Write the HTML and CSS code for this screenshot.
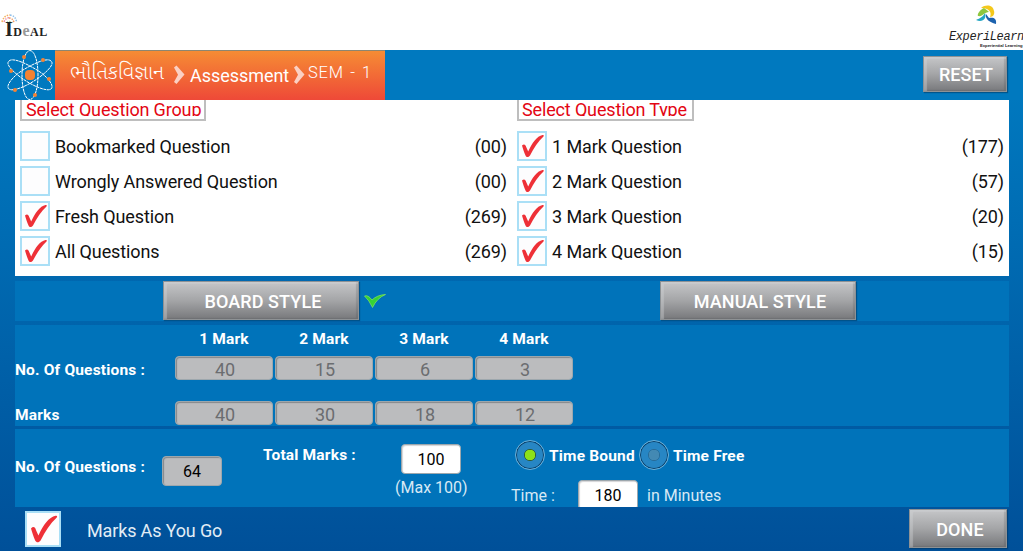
FILE: index.html
```html
<!DOCTYPE html>
<html lang="gu">
<head>
    <meta charset="UTF-8">
    <meta name="viewport" content="width=device-width, initial-scale=1.0">
    <title>Assessment</title>
    <link rel="stylesheet" href="styles.css">
</head>
<body>
    <!-- Shared shapes -->
    <svg width="0" height="0" class="defs">
        <symbol id="tick" viewBox="0 0 30 30">
            <path d="M5 14.500 C7 12.500 8.500 13.500 9.200 16 L11.200 20.500 C15 12 20 5 25.500 4 Q27.500 3.500 26.500 5.500 C21 10.500 17 17 13 24.500 C11.500 26.500 9.500 26.500 8.500 24.500 C7 21 6 18 5 14.500Z" fill="#ee3037"/>
        </symbol>
        <symbol id="chevron" viewBox="0 0 12 20">
            <path d="M1 2.500 L3.500 0.500 L11.500 9.500 L3.500 19 L1 17 L5 9.800Z" fill="#fbd0c3"/>
        </symbol>
    </svg>

    <header class="brand">
        <div class="ideal">
            <svg class="ideal-dots" width="18" height="12" viewBox="0 0 18 12">
                <g fill="none" stroke-width="1.500" stroke-dasharray="1.500 1.200">
                    <path d="M1 8 Q3 1 9 1" stroke="#f4b05c"/>
                    <path d="M9 1 Q15 2 15.500 8" stroke="#8cbde8"/>
                    <path d="M3 8 Q5 3 9 4" stroke="#ee8fa5"/>
                    <path d="M8 4 Q12 4 13 9" stroke="#f09a62"/>
                    <path d="M6 9 Q8 6 11 9" stroke="#a2d388"/>
                </g>
            </svg>
            <span class="ideal-text"><b>I</b>D<i>e</i>AL</span>
        </div>
        <div class="experi">
            <svg class="experi-mark" width="24" height="22" viewBox="0 0 24 22">
                <path d="M6 4 C11 0 18 1 19 7 C20 10 18 13 15 13 C17 8 14 4 6 4Z" fill="#f4c81b"/>
                <path d="M9 4 C4 6 2 11 3 12 C8 13 9 8 14 8 C11 5 10 5 9 4Z" fill="#8ec63f"/>
                <path d="M1 16 C5 14 8 13 10 9 C12 14 8 19 1 16Z" fill="#24a6c4"/>
                <path d="M11 10 C10 15 14 18 21 20 C22 14 18 13 14 14Z" fill="#1c62ae"/>
            </svg>
            <span class="experi-name">ExperiLearn</span>
            <span class="experi-tag">Experiential Learning</span>
        </div>
    </header>

    <main class="app">
        <nav class="topbar">
            <svg class="atom" width="50" height="50" viewBox="0 0 50 50">
                <g fill="none" stroke="#fff" stroke-width="1" stroke-dasharray="3 .6">
                    <path d="M25 0.500 C30 1 33 12 33 25 S30 49 25 49.500 S17 38 17 25 S20 1 25 0.500Z"/>
                    <path d="M4 11 C8 7 22 14 32 20 S50 36 46 39 S28 36 18 29 S0 14 4 11Z"/>
                    <path d="M46 11 C42 7 28 14 18 20 S0 36 4 39 S22 36 32 29 S50 14 46 11Z"/>
                </g>
                <g fill="#f58232">
                    <rect x="20" y="20" width="10" height="10" rx="4"/>
                    <circle cx="19" cy="7" r="2"/>
                    <circle cx="38" cy="10" r="2"/>
                    <circle cx="6" cy="21" r="2"/>
                    <circle cx="44" cy="29" r="2"/>
                    <circle cx="10" cy="40" r="2"/>
                    <circle cx="30" cy="45" r="2"/>
                </g>
            </svg>
            <div class="crumbs">
                <span class="subject">ભૌતિકવિજ્ઞાન</span>
                <svg class="chevron" width="12" height="20"><use href="#chevron"/></svg>
                <span class="section">Assessment</span>
                <svg class="chevron" width="12" height="20"><use href="#chevron"/></svg>
                <span class="sem">SEM - 1</span>
            </div>
            <button class="btn reset">RESET</button>
        </nav>

        <section class="filters">
            <div class="group">
                <h2 class="legend"><span>Select Question Group</span></h2>
                <div class="option"><span class="box"></span><span class="name">Bookmarked Question</span><span>(00)</span></div>
                <div class="option"><span class="box"></span><span class="name">Wrongly Answered Question</span><span>(00)</span></div>
                <div class="option"><span class="box"><svg><use href="#tick"/></svg></span><span class="name">Fresh Question</span><span>(269)</span></div>
                <div class="option"><span class="box"><svg><use href="#tick"/></svg></span><span class="name">All Questions</span><span>(269)</span></div>
            </div>
            <div class="group">
                <h2 class="legend type"><span>Select Question Type</span></h2>
                <div class="option"><span class="box"><svg><use href="#tick"/></svg></span><span class="name">1 Mark Question</span><span>(177)</span></div>
                <div class="option"><span class="box"><svg><use href="#tick"/></svg></span><span class="name">2 Mark Question</span><span>(57)</span></div>
                <div class="option"><span class="box"><svg><use href="#tick"/></svg></span><span class="name">3 Mark Question</span><span>(20)</span></div>
                <div class="option"><span class="box"><svg><use href="#tick"/></svg></span><span class="name">4 Mark Question</span><span>(15)</span></div>
            </div>
        </section>

        <section class="styles">
            <div class="style-cell">
                <button class="btn style-btn">BOARD STYLE</button>
                <svg class="selected" width="22" height="14" viewBox="0 0 22 14">
                    <path d="M0.500 2 Q4 0.500 8 6 Q13 1 21.500 0.500 Q13 4 8.500 13.500 Q5 6 0.500 2Z" fill="#35d335" stroke="#8bea5c" stroke-width=".7"/>
                </svg>
            </div>
            <div class="style-cell">
                <button class="btn style-btn">MANUAL STYLE</button>
            </div>
        </section>

        <section class="marks">
            <div class="marks-row heads">
                <span class="label"></span><b>1 Mark</b><b>2 Mark</b><b>3 Mark</b><b>4 Mark</b>
            </div>
            <div class="marks-row">
                <span class="label">No. Of Questions :</span>
                <span class="field grey">40</span><span class="field grey">15</span><span class="field grey">6</span><span class="field grey">3</span>
            </div>
            <div class="marks-row last">
                <span class="label">Marks</span>
                <span class="field grey">40</span><span class="field grey">30</span><span class="field grey">18</span><span class="field grey">12</span>
            </div>
        </section>

        <section class="totals">
            <div class="count">
                <span class="label">No. Of Questions :</span>
                <span class="field count-field">64</span>
            </div>
            <span class="label total-label">Total Marks :</span>
            <div class="total">
                <span class="field white">100</span>
                <span class="hint">(Max 100)</span>
            </div>
            <div class="time">
                <div class="radios">
                    <span class="radio on"></span><b class="bound">Time Bound</b>
                    <span class="radio"></span><b>Time Free</b>
                </div>
                <div class="duration">
                    <span class="time-label">Time :</span>
                    <span class="field white">180</span>
                    <span class="unit">in Minutes</span>
                </div>
            </div>
        </section>

        <footer class="bottom">
            <span class="box big"><svg><use href="#tick"/></svg></span>
            <span class="go">Marks As You Go</span>
            <button class="btn done">DONE</button>
        </footer>
    </main>
</body>
</html>
```
FILE: styles.css
```css
* {
    margin: 0;
    padding: 0;
    box-sizing: border-box;
}

body {
    width: 1023px;
    height: 551px;
    overflow: hidden;
    background: #fff;
    font-family: Roboto, "Noto Sans Gujarati", "Liberation Sans", sans-serif;
    font-size: 18px;
}

svg {
    display: block;
    flex: none;
}

.defs {
    position: absolute;
}

/* Logos */
.brand {
    height: 50px;
    display: flex;
    justify-content: space-between;
}

.ideal {
    padding: 14px 0 0 1px;
}

.ideal-text {
    display: block;
    margin-top: -7px;
    padding-left: 4px;
    font: bold 12px/20px "Liberation Serif", serif;
    letter-spacing: 0.5px;
    color: #222;
}

.ideal-text b {
    font-size: 20px;
}

.ideal-text i {
    font-style: normal;
    font-size: 16px;
    color: #999;
}

.experi {
    width: 75px;
    padding-top: 4px;
    display: flex;
    flex-direction: column;
    white-space: nowrap;
}

.experi-mark {
    margin-left: 27px;
}

.experi-name {
    font: italic 12px/15px "Liberation Mono", monospace;
    letter-spacing: -0.4px;
    margin: 4px 0 0 1px;
    color: #222;
}

.experi-tag {
    margin: -2px 0 0 32px;
    font: bold 4.2px/6px "Liberation Sans", sans-serif;
    color: #222;
}

/* Blue screen */
.app {
    height: 501px;
    background: linear-gradient(#007cc2, #005099);
}

.topbar {
    height: 50px;
    padding-left: 5px;
    display: flex;
    background: #0079bf;
}

.crumbs {
    width: 330px;
    padding-left: 15px;
    display: flex;
    background: linear-gradient(#f68c34, #ee4938);
    border-top: 1px solid #8d8671;
    color: #fff;
}

.subject {
    width: 98px;
    flex: none;
    font-size: 20.5px;
    line-height: 42px;
    font-weight: 300;
    white-space: nowrap;
}

.crumbs .chevron {
    margin: 14px 0 0 5px;
}

.section {
    width: 98px;
    flex: none;
    margin-left: 5px;
    line-height: 49px;
    letter-spacing: -0.05px;
}

.sem {
    margin-left: 3px;
    font-size: 16.5px;
    font-weight: 300;
    line-height: 44px;
    letter-spacing: 0.8px;
    word-spacing: 1.5px;
    white-space: nowrap;
}

/* Grey metal buttons */
.btn {
    font: 500 18px Roboto, "Liberation Sans", sans-serif;
    letter-spacing: 0.1px;
    color: #fff;
    background: linear-gradient(#c5c6c8, #a4a5a7 50%, #78797c);
    border: 1px solid #8e9295;
    box-shadow: inset 3px 2px 1px rgba(210, 213, 215, 0.4), inset -2px -1px 1px rgba(70, 75, 80, 0.2), 1px 1px 1px rgba(0, 50, 90, 0.5);
}

.reset {
    width: 84px;
    height: 36px;
    margin: 6px 16px 0 auto;
    padding-left: 2px;
}

/* White filter panel */
.filters {
    width: 994px;
    height: 176px;
    margin-left: 15px;
    padding: 0 5px;
    display: flex;
    background: #fff;
    color: #111;
    letter-spacing: -0.1px;
}

.group {
    width: 487px;
}

.group + .group {
    margin-left: 10px;
}

.legend {
    width: 186px;
    height: 21px;
    margin-bottom: 8px;
    padding-left: 4px;
    font-size: 18px;
    font-weight: 400;
    letter-spacing: -0.15px;
    color: #e30613;
    border: 2px solid #bebebe;
    border-top: 0;
}

.legend.type {
    width: 177px;
    padding-left: 3px;
}

/* The lower edge of the legend trims the descenders */
.legend span {
    display: block;
    height: 16px;
    line-height: 19px;
    overflow: hidden;
    white-space: nowrap;
}

.option {
    height: 35px;
    display: flex;
    line-height: 35px;
}

.name {
    flex: 1;
    margin-left: 5px;
}

.box {
    width: 30px;
    height: 30px;
    margin-top: 2px;
    flex: none;
    background: #fdfdfe;
    border: 2px solid #aadff6;
}

.box svg {
    width: 30px;
    height: 30px;
    margin: -2px;
}

/* Board / manual style */
.styles {
    width: 994px;
    height: 40px;
    margin: 5px 0 4px 15px;
    display: flex;
    background: #0073ba;
}

.style-cell {
    width: 497px;
    padding-left: 148px;
    display: flex;
}

.style-btn {
    width: 196px;
    height: 39px;
    padding: 2px 0 0 4px;
}

.selected {
    margin: 13px 0 0 5px;
}

/* Question and marks table */
.marks {
    width: 994px;
    height: 101px;
    margin: 0 0 3px 15px;
    background: #0073ba;
    color: #fff;
}

.marks-row {
    height: 24px;
    margin-bottom: 21px;
    display: grid;
    grid-template-columns: 158px repeat(4, 98px);
    column-gap: 2px;
    font-size: 16px;
}

.marks-row .label {
    padding-top: 5px;
}

.heads {
    height: 31px;
    margin-bottom: 0;
    line-height: 28px;
    text-align: center;
}

.heads b,
.label,
.radios b {
    font-weight: 700;
    font-size: 15.5px;
    letter-spacing: 0.18px;
}

.label {
    white-space: nowrap;
}

.last {
    margin-bottom: 0;
}

.field {
    height: 24px;
    border-radius: 4px;
    font-size: 18px;
    line-height: 25px;
    text-align: center;
    background: #bbbcbe;
    border: 1px solid #9da7ad;
    box-shadow: inset 1px 1px 1px rgba(80, 85, 90, 0.5);
}

.grey {
    padding-left: 2px;
    color: #6b6d70;
}

/* Totals and time */
.totals {
    width: 994px;
    height: 78px;
    margin-left: 15px;
    display: flex;
    overflow: hidden;
    background: #0073ba;
    color: #fff;
}

.count {
    width: 248px;
    display: flex;
    line-height: 77px;
}

.count .label {
    width: 147px;
}

.count-field {
    width: 60px;
    height: 30px;
    margin-top: 27px;
    font-size: 16px;
    line-height: 29px;
    color: #000;
}

.total-label {
    width: 132px;
    line-height: 53px;
}

.total {
    width: 116px;
}

.white {
    display: block;
    width: 60px;
    height: 30px;
    font-size: 16px;
    line-height: 30px;
    background: #fff;
    color: #000;
    box-shadow: inset 1px 1px 1px rgba(80, 85, 90, 0.25);
}

.total .white {
    margin: 15px 0 0 6px;
}

.hint {
    display: block;
    line-height: 28px;
    font-size: 16px;
    color: #d7e9f5;
}

.radios {
    height: 51px;
    padding-left: 4px;
    display: flex;
    align-items: center;
}

.radios b {
    padding-top: 3px;
}

.radio {
    width: 30px;
    height: 30px;
    margin-right: 4px;
    border-radius: 50%;
    border: 1px solid #6db0d8;
    background: radial-gradient(circle, #4389b3 5px, #276b98 5.5px, #2786c4 6.5px);
    box-shadow: inset 0 0 0 1px #093f68;
}

.radio.on {
    background: radial-gradient(circle, #8ce11a 5px, #315e32 5.5px, #2786c4 6.5px);
}

.bound {
    margin-right: 4px;
}

.duration {
    display: flex;
    font-size: 16px;
    line-height: 31px;
    color: #d7e9f5;
}

.time-label {
    width: 67px;
}

.unit {
    margin-left: 9px;
}

/* Bottom bar */
.bottom {
    height: 44px;
    padding-left: 25px;
    display: flex;
    color: #e2edf6;
    letter-spacing: -0.15px;
}

.big {
    width: 36px;
    height: 36px;
    margin-top: 4px;
}

.big svg {
    width: 36px;
    height: 36px;
}

.go {
    margin-left: 26px;
    line-height: 48px;
}

.done {
    width: 98px;
    height: 39px;
    margin: 2px 16px 0 auto;
    padding: 2px 0 0 4px;
}
```
